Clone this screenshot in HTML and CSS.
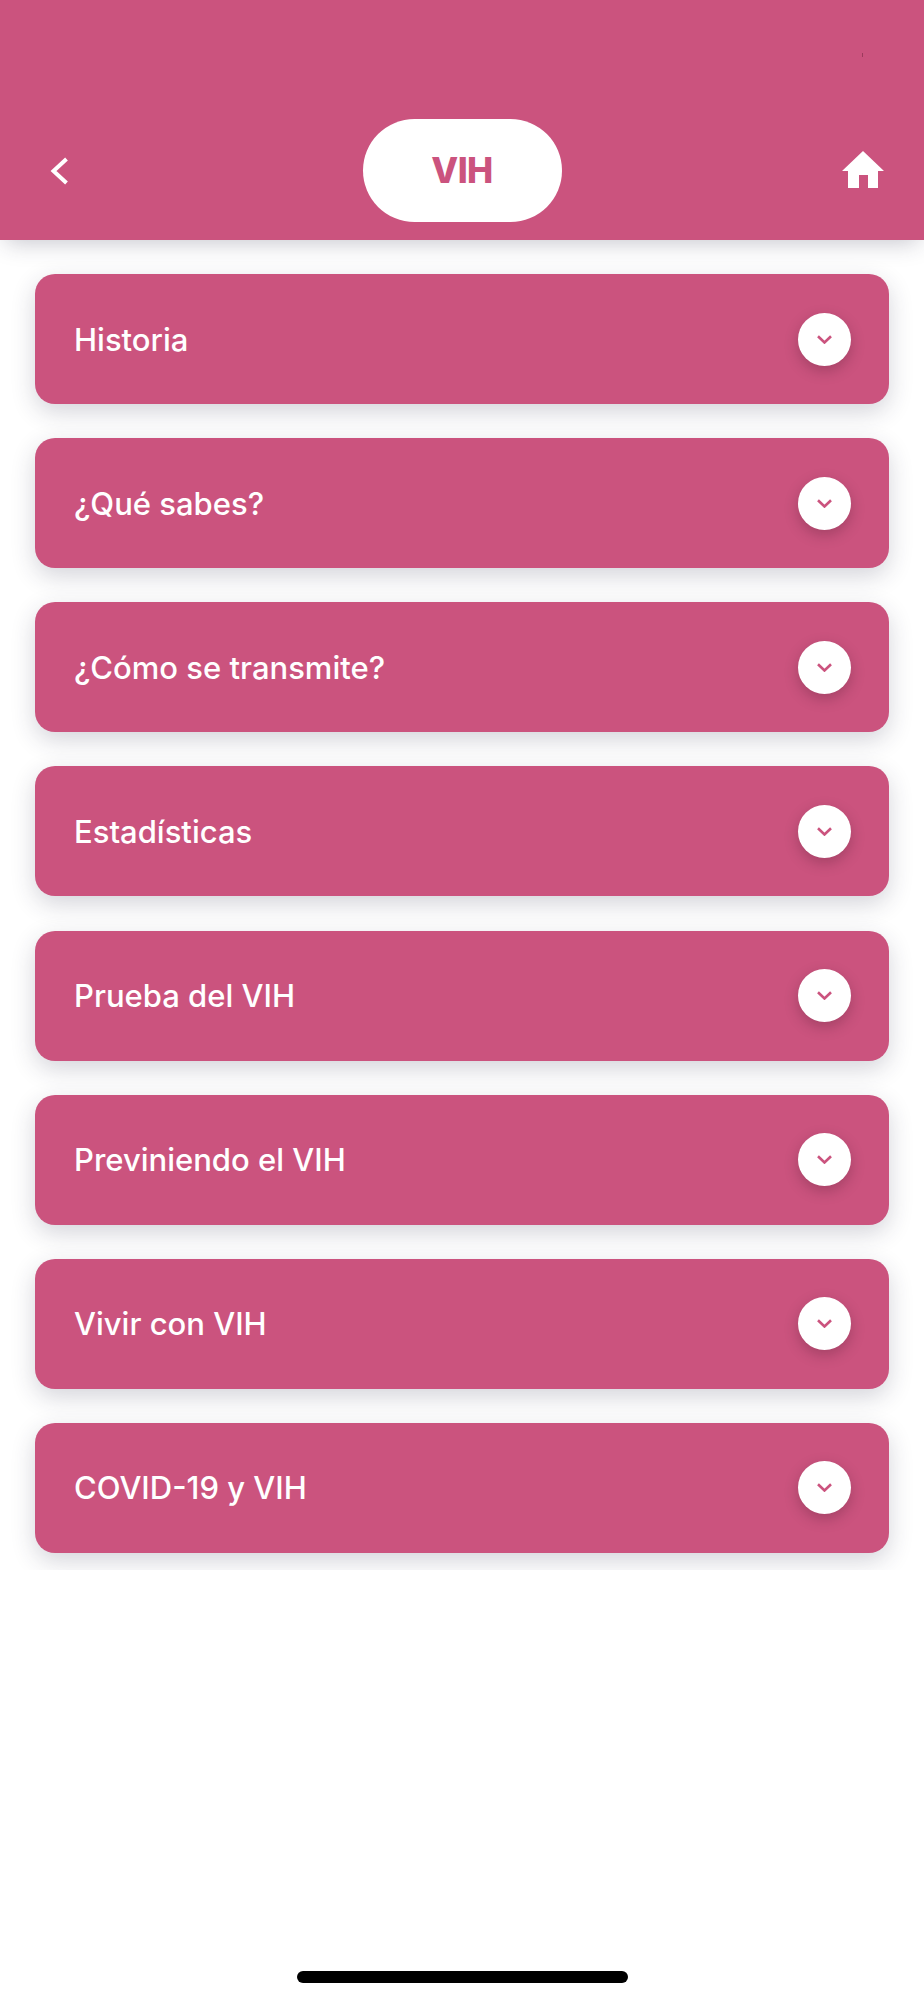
FILE: index.html
```html
<!DOCTYPE html>
<html lang="es">
<head>
    <meta charset="UTF-8">
    <meta name="viewport" content="width=device-width, initial-scale=1.0">
    <title>VIH</title>
    <link rel="stylesheet" href="styles.css">
</head>
<body>
    <header class="top-bar">
        <span class="speck"></span>
        <button class="icon-btn back-btn" aria-label="Volver">
            <svg width="20" height="30" viewBox="0 0 20 30"><path d="M16.5 3 3.5 15l13 12" fill="none" stroke="#fff" stroke-width="4"/></svg>
        </button>
        <h1 class="title-pill">VIH</h1>
        <button class="icon-btn home-btn" aria-label="Inicio">
            <svg width="42" height="37" viewBox="0 0 42 37"><path d="M21 0 42 20H36V37H26V24H17V37H6V20H0Z" fill="#fff"/></svg>
        </button>
    </header>

    <main class="topic-list">
        <div class="topic-card">
            <span class="topic-name">Historia</span>
            <span class="toggle"><svg width="15" height="9" viewBox="0 0 15 9"><path d="M1 1.2 7.5 7.5 14 1.2" fill="none" stroke="#cb537e" stroke-width="2.6"/></svg></span>
        </div>
        <div class="topic-card">
            <span class="topic-name">¿Qué sabes?</span>
            <span class="toggle"><svg width="15" height="9" viewBox="0 0 15 9"><path d="M1 1.2 7.5 7.5 14 1.2" fill="none" stroke="#cb537e" stroke-width="2.6"/></svg></span>
        </div>
        <div class="topic-card">
            <span class="topic-name">¿Cómo se transmite?</span>
            <span class="toggle"><svg width="15" height="9" viewBox="0 0 15 9"><path d="M1 1.2 7.5 7.5 14 1.2" fill="none" stroke="#cb537e" stroke-width="2.6"/></svg></span>
        </div>
        <div class="topic-card">
            <span class="topic-name">Estadísticas</span>
            <span class="toggle"><svg width="15" height="9" viewBox="0 0 15 9"><path d="M1 1.2 7.5 7.5 14 1.2" fill="none" stroke="#cb537e" stroke-width="2.6"/></svg></span>
        </div>
        <div class="topic-card">
            <span class="topic-name">Prueba del VIH</span>
            <span class="toggle"><svg width="15" height="9" viewBox="0 0 15 9"><path d="M1 1.2 7.5 7.5 14 1.2" fill="none" stroke="#cb537e" stroke-width="2.6"/></svg></span>
        </div>
        <div class="topic-card">
            <span class="topic-name">Previniendo el VIH</span>
            <span class="toggle"><svg width="15" height="9" viewBox="0 0 15 9"><path d="M1 1.2 7.5 7.5 14 1.2" fill="none" stroke="#cb537e" stroke-width="2.6"/></svg></span>
        </div>
        <div class="topic-card">
            <span class="topic-name">Vivir con VIH</span>
            <span class="toggle"><svg width="15" height="9" viewBox="0 0 15 9"><path d="M1 1.2 7.5 7.5 14 1.2" fill="none" stroke="#cb537e" stroke-width="2.6"/></svg></span>
        </div>
        <div class="topic-card">
            <span class="topic-name">COVID-19 y VIH</span>
            <span class="toggle"><svg width="15" height="9" viewBox="0 0 15 9"><path d="M1 1.2 7.5 7.5 14 1.2" fill="none" stroke="#cb537e" stroke-width="2.6"/></svg></span>
        </div>
    </main>

    <div class="home-indicator"></div>
</body>
</html>
```

FILE: styles.css
```css
* {
    margin: 0;
    padding: 0;
    box-sizing: border-box;
    font-family: Inter, 'Noto Sans', sans-serif;
}

body {
    display: flex;
    flex-direction: column;
    height: 2000px;
    background: #fff;
    overflow: hidden;
}

.top-bar {
    position: relative;
    z-index: 2;
    display: grid;
    grid-template-columns: 1fr 199px 1fr;
    align-items: start;
    height: 240px;
    padding: 119px 40px 0 50px;
    background: #cb537e;
    box-shadow: 0 8px 22px -6px rgba(40, 40, 70, 0.28);
}

.speck {
    position: absolute;
    left: 862px;
    top: 53px;
    width: 1px;
    height: 4px;
    background: #9c3a5c;
}

.icon-btn {
    display: flex;
    background: none;
    border: none;
}

.back-btn {
    margin-top: 37px;
}

.home-btn {
    justify-self: end;
    margin-top: 32px;
}

.title-pill {
    display: flex;
    align-items: center;
    justify-content: center;
    height: 103px;
    margin-left: -5px;
    margin-right: 5px;
    padding-bottom: 2px;
    border-radius: 52px;
    background: #fff;
    color: #cb537e;
    font-size: 35px;
    font-weight: 800;
    letter-spacing: -0.6px;
}

.topic-list {
    display: flex;
    flex-direction: column;
    gap: 34.15px;
    height: 1330px;
    padding: 34px 35px 0;
    overflow: hidden;
}

.topic-card {
    display: flex;
    flex: none;
    align-items: center;
    justify-content: space-between;
    height: 130px;
    padding: 0 38px 0 39px;
    border-radius: 20px;
    background: #cb537e;
    box-shadow: 0 8px 24px rgba(40, 40, 70, 0.2);
}

.topic-name {
    color: #fff;
    font-size: 31px;
    font-weight: 500;
}

.toggle {
    display: flex;
    align-items: center;
    justify-content: center;
    width: 53px;
    height: 53px;
    border-radius: 50%;
    background: #fff;
    box-shadow: 0 5px 14px rgba(60, 20, 40, 0.28);
}

.home-indicator {
    width: 331px;
    height: 12px;
    margin: auto auto 17px;
    border-radius: 6px;
    background: #000;
}
```
